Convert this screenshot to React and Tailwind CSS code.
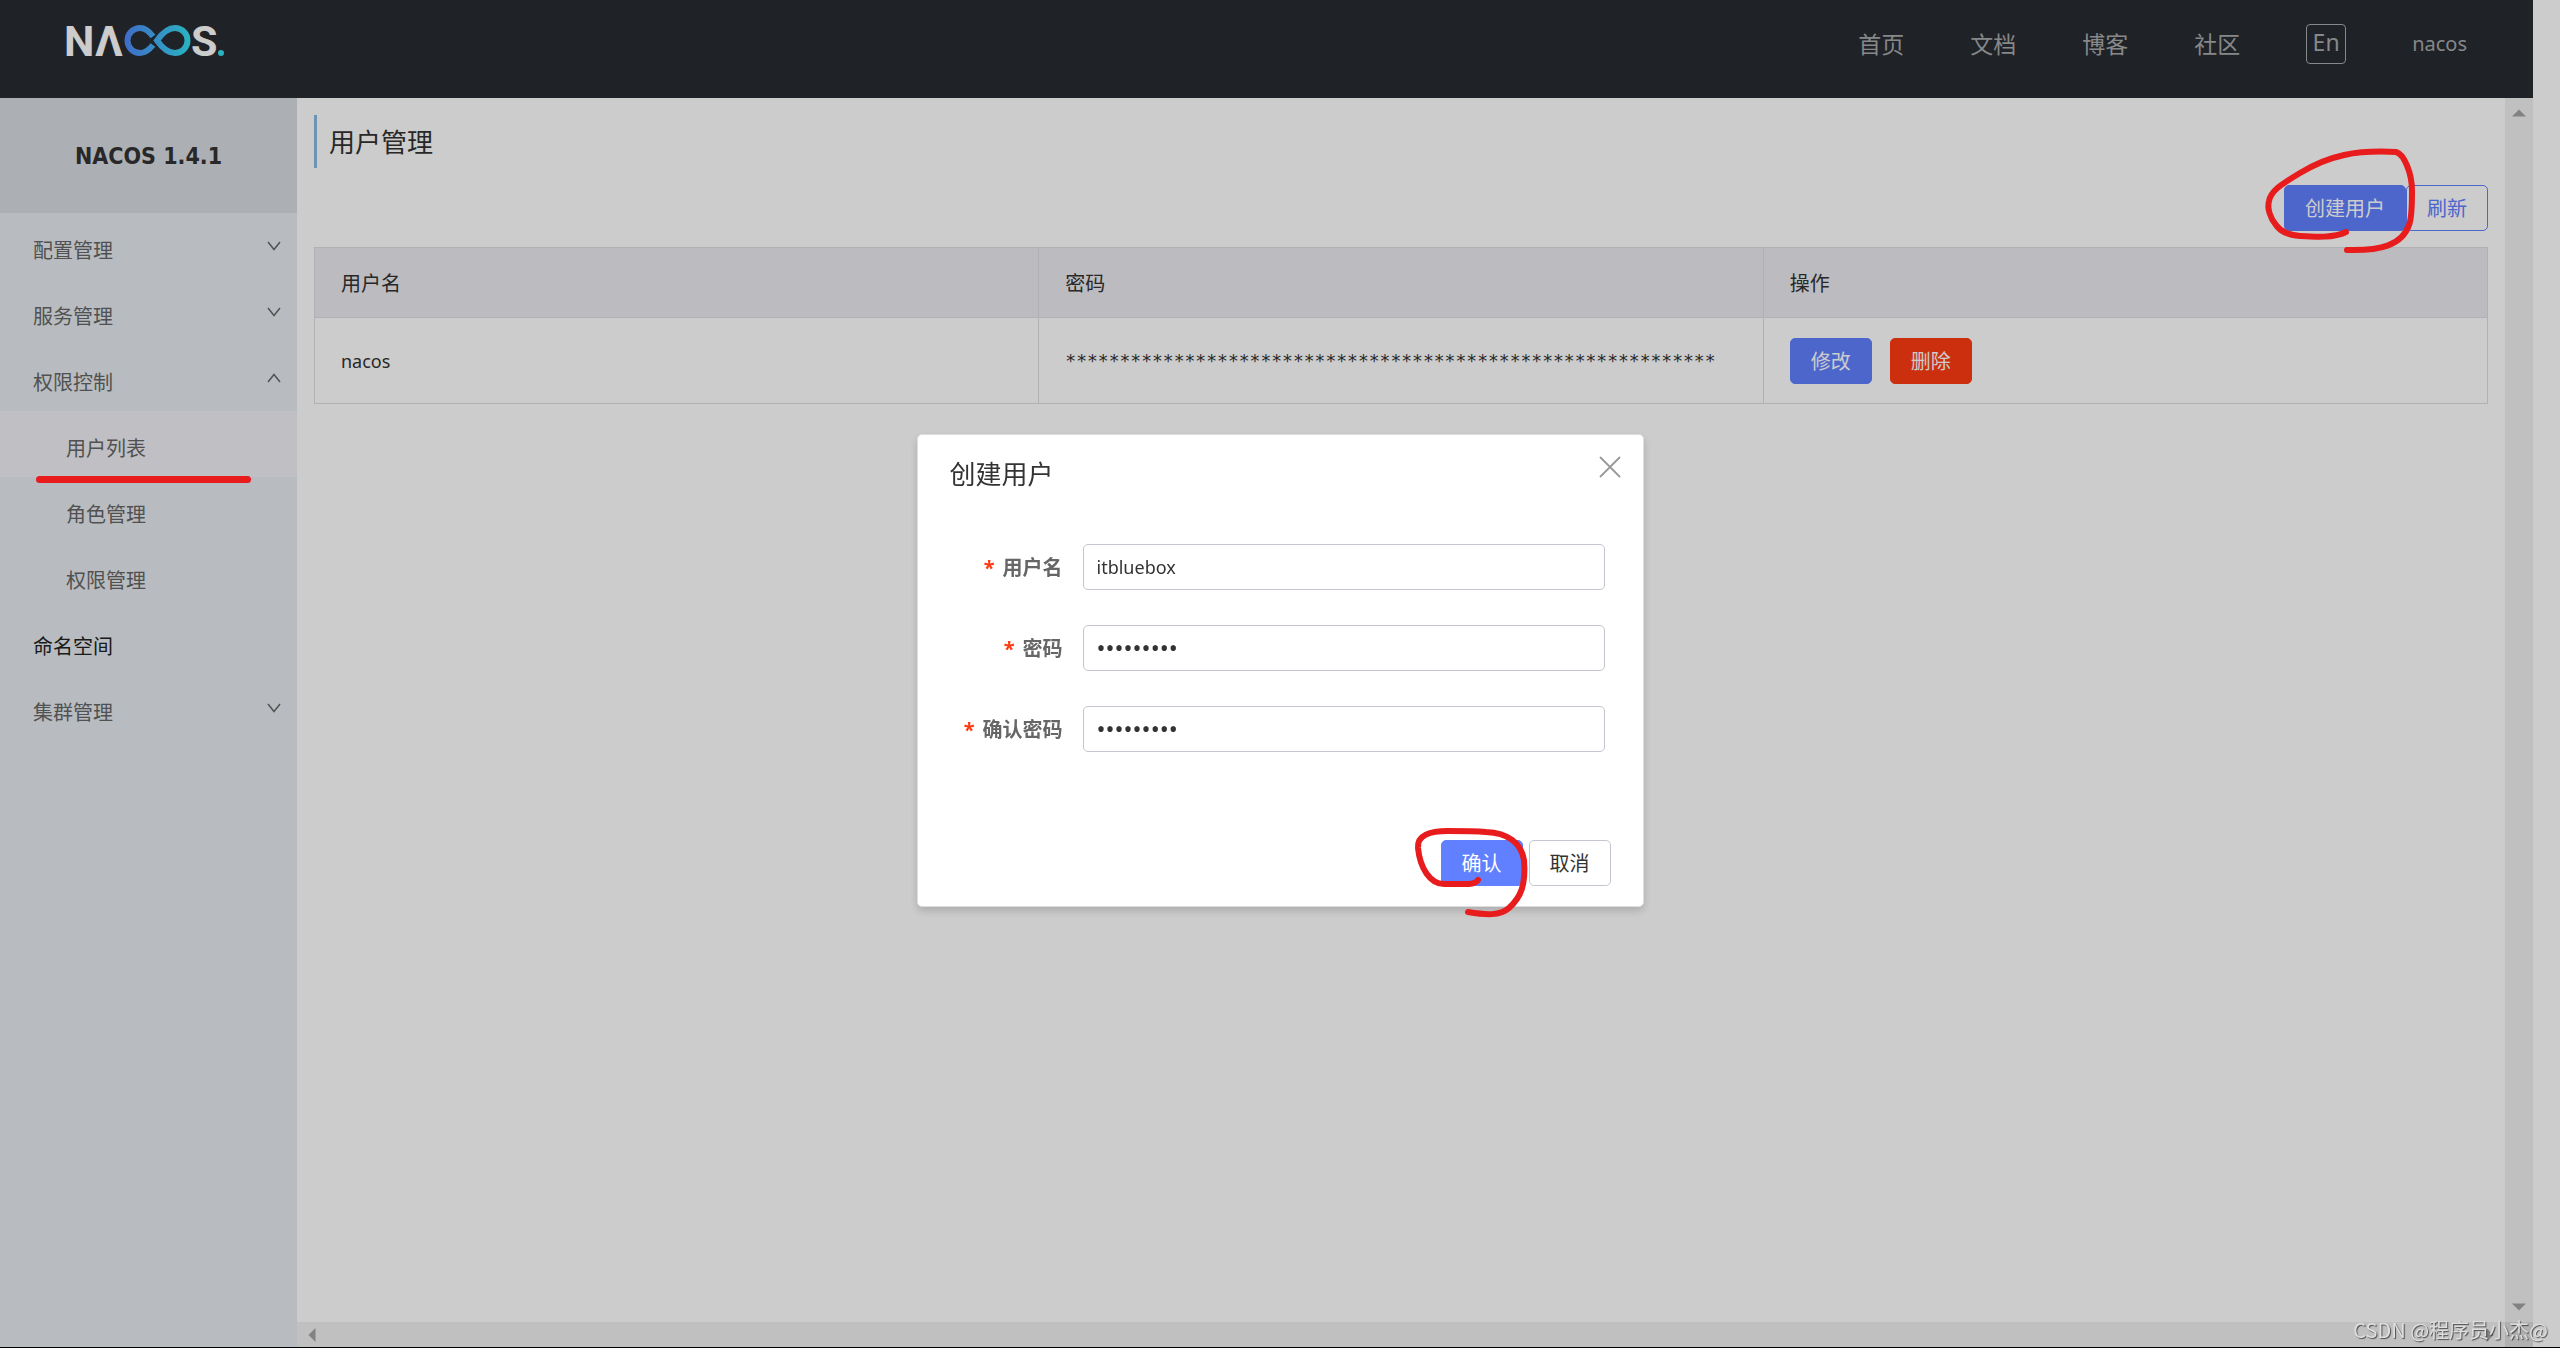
import React, { useState } from 'react';
import clsx from 'clsx';

const NAV_LINKS = ['首页', '文档', '博客', '社区'];

const MENU = [
  { label: '配置管理', children: [] },
  { label: '服务管理', children: [] },
  { label: '权限控制', open: true, children: ['用户列表', '角色管理', '权限管理'] },
  { label: '命名空间' },
  { label: '集群管理', children: [] },
];

const USERS = [{ username: 'nacos', password: '*'.repeat(60) }];

function Logo() {
  return (
    <svg width="170" height="70" viewBox="60 6 170 70" role="img" aria-label="NACOS">
      <defs>
        <linearGradient id="loop" gradientUnits="userSpaceOnUse" x1="125" y1="0" x2="190" y2="0">
          <stop offset="0" stopColor="#5088fa" />
          <stop offset="1" stopColor="#35e0f2" />
        </linearGradient>
      </defs>
      <g className="font-['Roboto',sans-serif] font-bold" fill="#fff" fontSize="43">
        <text x="64" y="56">N</text>
        <text x="95" y="56">Λ</text>
        <text x="191" y="56">S</text>
      </g>
      <g fill="none" stroke="url(#loop)" strokeWidth="6">
        <path d="M153 36.5 C149 31 145 28 140 28 A12.5 12.5 0 0 0 140 53 C145 53 149 50 153 45" />
        <path d="M157 40.5 C163 32 168 28 175 28 A12.5 12.5 0 0 1 175 53 C168 53 163 49 157 40.5 Z" />
      </g>
      <circle cx="221" cy="53" r="3" fill="#35e0f2" />
    </svg>
  );
}

function Chevron({ open }) {
  return (
    <svg
      width="14"
      height="10"
      viewBox="0 0 14 10"
      fill="none"
      stroke="#666"
      strokeWidth="1.5"
      className={clsx('shrink-0', open && 'rotate-180')}
    >
      <path d="M1 1 L7 8.5 L13 1" />
    </svg>
  );
}

function Header() {
  return (
    <header className="flex h-[98px] shrink-0 items-start justify-between bg-[#272b30] pl-[60px] pr-[66px] text-[#a8aaac]">
      <a href="#home" className="pt-[6px]">
        <Logo />
      </a>
      <nav className="flex h-[88px] items-center gap-[66px] text-[23px]">
        {NAV_LINKS.map((link) => (
          <a key={link} href="#nav">
            {link}
          </a>
        ))}
        <button
          type="button"
          className="flex h-10 w-10 items-center justify-center rounded-sm border border-[#a8aaac] pb-1 text-[23px]"
        >
          En
        </button>
        <a href="#account" className="text-xl">
          nacos
        </a>
      </nav>
    </header>
  );
}

function Sidebar() {
  return (
    <aside className="w-[297px] shrink-0 bg-[#e7ecf0] text-[#666]">
      <h1 className="flex h-[115px] items-center justify-center bg-[#d8dce2] pt-[2px] font-['DejaVu_Sans_Condensed','DejaVu_Sans',sans-serif] text-[23px] font-bold text-[#333]">
        NACOS 1.4.1
      </h1>
      <ul>
        {MENU.map((item) => (
          <li key={item.label}>
            <a
              href="#menu"
              className={clsx(
                'flex h-[66px] items-center justify-between pl-[33px] pr-4',
                !item.children && 'text-[#222]'
              )}
            >
              <span className="pt-[10px]">{item.label}</span>
              {item.children && <Chevron open={item.open} />}
            </a>
            {item.open && (
              <ul>
                {item.children.map((child, i) => (
                  <li key={child} className={clsx('relative', i === 0 && 'bg-[#f1f0f6]')}>
                    <a href="#menu" className="flex h-[66px] items-center pl-[66px] pt-[10px]">
                      {child}
                    </a>
                    {i === 0 && (
                      <span className="absolute left-9 top-[65px] z-50 h-[7px] w-[215px] rounded-full bg-[#e81c1c]" />
                    )}
                  </li>
                ))}
              </ul>
            )}
          </li>
        ))}
      </ul>
    </aside>
  );
}

function Button({ variant = 'normal', children, ...props }) {
  return (
    <button
      type="button"
      className={clsx(
        'h-[46px] rounded-[5px] border px-5 pt-[2px] text-xl',
        variant === 'primary' && 'border-[#6080ff] bg-[#6080ff] text-white',
        variant === 'danger' && 'border-[#ff3b12] bg-[#ff3b12] text-white',
        variant === 'outline' && 'border-[#6080ff] text-[#6080ff]',
        variant === 'normal' && 'border-[#c4c6cf] bg-white text-[#333]'
      )}
      {...props}
    >
      {children}
    </button>
  );
}

// Hand-drawn marker strokes around the buttons
function Marker({ className, d, ...props }) {
  return (
    <svg className={clsx('pointer-events-none absolute z-50', className)} {...props}>
      <path d={d} fill="none" stroke="#e81c1c" strokeWidth="6" strokeLinecap="round" strokeLinejoin="round" />
    </svg>
  );
}

function UserTable({ onCreate }) {
  return (
    <main className="min-w-0 flex-1 bg-white px-[17px] pt-[17px] text-[#333]">
      <h2 className="flex h-[53px] items-center border-l-3 border-[#8cb8e2] pl-3 pt-[2px] text-[26px]">用户管理</h2>
      <div className="mt-[17px] flex justify-end">
        <div className="relative">
          <Button variant="primary" onClick={onCreate}>
            创建用户
          </Button>
          <Marker
            className="-left-[30px] -top-11"
            width="170"
            height="120"
            viewBox="-32 -44 170 120"
            d="M60 47 C48 53 30 52 14 51 C2 50 -6 46 -10 40 C-16 33 -19 23 -17 16 C-15 6 -6 0 14 -12 C44 -30 70 -35 110 -33 C118 -31 126 -12 126 6 C126 20 126 33 123 40 C116 60 95 66 61 65"
          />
        </div>
        <Button variant="outline">刷新</Button>
      </div>
      <table className="mt-4 w-full table-fixed border-collapse border border-[#dcdee3] text-left">
        <thead className="bg-[#ebecf0]">
          <tr className="h-[70px]">
            <th className="border border-[#dcdee3] px-[26px] pt-[2px] font-normal">用户名</th>
            <th className="border border-[#dcdee3] px-[26px] pt-[2px] font-normal">密码</th>
            <th className="border border-[#dcdee3] px-[26px] pt-[2px] font-normal">操作</th>
          </tr>
        </thead>
        <tbody>
          {USERS.map((user) => (
            <tr key={user.username} className="h-[86px]">
              <td className="border border-[#dcdee3] px-[26px] text-lg">{user.username}</td>
              <td className="border border-[#dcdee3] px-[26px] font-['DejaVu_Sans_Mono',monospace] text-lg">
                {user.password}
              </td>
              <td className="border border-[#dcdee3] px-[26px]">
                <div className="flex gap-[18px]">
                  <Button variant="primary">修改</Button>
                  <Button variant="danger">删除</Button>
                </div>
              </td>
            </tr>
          ))}
        </tbody>
      </table>
    </main>
  );
}

function ScrollArrow({ className }) {
  return (
    <svg width="14" height="14" viewBox="0 0 14 14" fill="#a3a3a3" className={className}>
      <path d="M0 10.5 L7 3.5 L14 10.5 Z" />
    </svg>
  );
}

function Field({ id, label, type, ...props }) {
  return (
    <div className="flex h-[46px] items-center gap-5">
      <label htmlFor={id} className="w-[113px] whitespace-nowrap pt-[2px] text-right font-bold text-[#666]">
        <span className="mr-2 text-[#ff3b12]">*</span>
        {label}
      </label>
      <input
        id={id}
        type={type}
        className={clsx(
          'h-full min-w-0 flex-1 rounded-[5px] border border-[#c4c6cf] px-[13px] text-[#333] outline-none',
          type === 'password' ? 'text-2xl' : 'text-lg'
        )}
        {...props}
      />
    </div>
  );
}

function CreateUserDialog({ onClose }) {
  const [form, setForm] = useState({
    username: 'itbluebox',
    password: 'itbluebox',
    confirm: 'itbluebox',
  });

  const update = (key) => (e) => setForm({ ...form, [key]: e.target.value });

  return (
    <div className="fixed inset-0 z-40 flex items-center justify-center bg-black/20 pb-2">
      <div
        role="dialog"
        aria-label="创建用户"
        className="relative w-[727px] rounded-[5px] border border-[#dcdee3] bg-white shadow-[0_4px_8px_rgba(0,0,0,0.16)]"
      >
        <h3 className="pl-8 pt-[19px] text-[26px] leading-10 text-[#333]">创建用户</h3>
        <button type="button" aria-label="Close" onClick={onClose} className="absolute right-[22px] top-[21px]">
          <svg width="22" height="22" viewBox="0 0 22 22" fill="none" stroke="#999" strokeWidth="1.8" strokeLinecap="round">
            <path d="M1.5 1.5 L20.5 20.5 M20.5 1.5 L1.5 20.5" />
          </svg>
        </button>

        <form className="mt-[50px] flex flex-col gap-[35px] pl-8 pr-[38px]">
          <Field id="username" label="用户名" type="text" value={form.username} onChange={update('username')} />
          <Field id="password" label="密码" type="password" value={form.password} onChange={update('password')} />
          <Field id="confirm" label="确认密码" type="password" value={form.confirm} onChange={update('confirm')} />
        </form>

        <div className="flex justify-end gap-[6px] pb-5 pr-8 pt-[88px]">
          <div className="relative">
            <Button variant="primary" onClick={onClose}>
              确认
            </Button>
            <Marker
              className="-left-[31px] -top-4"
              width="124"
              height="100"
              viewBox="-32 -16 124 100"
              d="M36 40 C34 44 27 44 22 44 L2 44 C-12 44 -22 28 -24 8 C-25 -5 -12 -9 6 -9 C20 -9 32 -9 44 -8 C66 -7 79 3 82 20 C84 45 79 57 67 68 C58 76 44 75 26 72"
            />
          </div>
          <Button onClick={onClose}>取消</Button>
        </div>
      </div>
    </div>
  );
}

export default function App() {
  const [dialogOpen, setDialogOpen] = useState(true);

  return (
    <div className="flex h-screen flex-col border-b border-black bg-white pr-[27px] font-['Noto_Sans','Noto_Sans_CJK_SC',sans-serif] text-xl">
      <Header />
      <div className="flex min-h-0 flex-1">
        <Sidebar />
        <div className="flex min-w-0 flex-1 flex-col">
          <div className="flex min-h-0 flex-1">
            <UserTable onCreate={() => setDialogOpen(true)} />
            <div className="flex w-7 flex-col items-center justify-between bg-[#f1f1f1] py-2">
              <ScrollArrow />
              <ScrollArrow className="rotate-180" />
            </div>
          </div>
          <div className="flex h-[25px]">
            <div className="flex flex-1 items-center justify-between bg-[#f1f1f1] px-2">
              <ScrollArrow className="-rotate-90" />
              <ScrollArrow className="rotate-90" />
            </div>
            <div className="w-7 bg-[#dcdcdc]" />
          </div>
        </div>
      </div>

      {dialogOpen && <CreateUserDialog onClose={() => setDialogOpen(false)} />}

      <span className="fixed bottom-1 right-3 z-50 font-['Noto_Sans_CJK_SC',sans-serif] text-xl text-[#dedede] [text-shadow:1px_1px_1px_rgba(0,0,0,0.6)]">
        CSDN @程序员小杰@
      </span>
    </div>
  );
}
